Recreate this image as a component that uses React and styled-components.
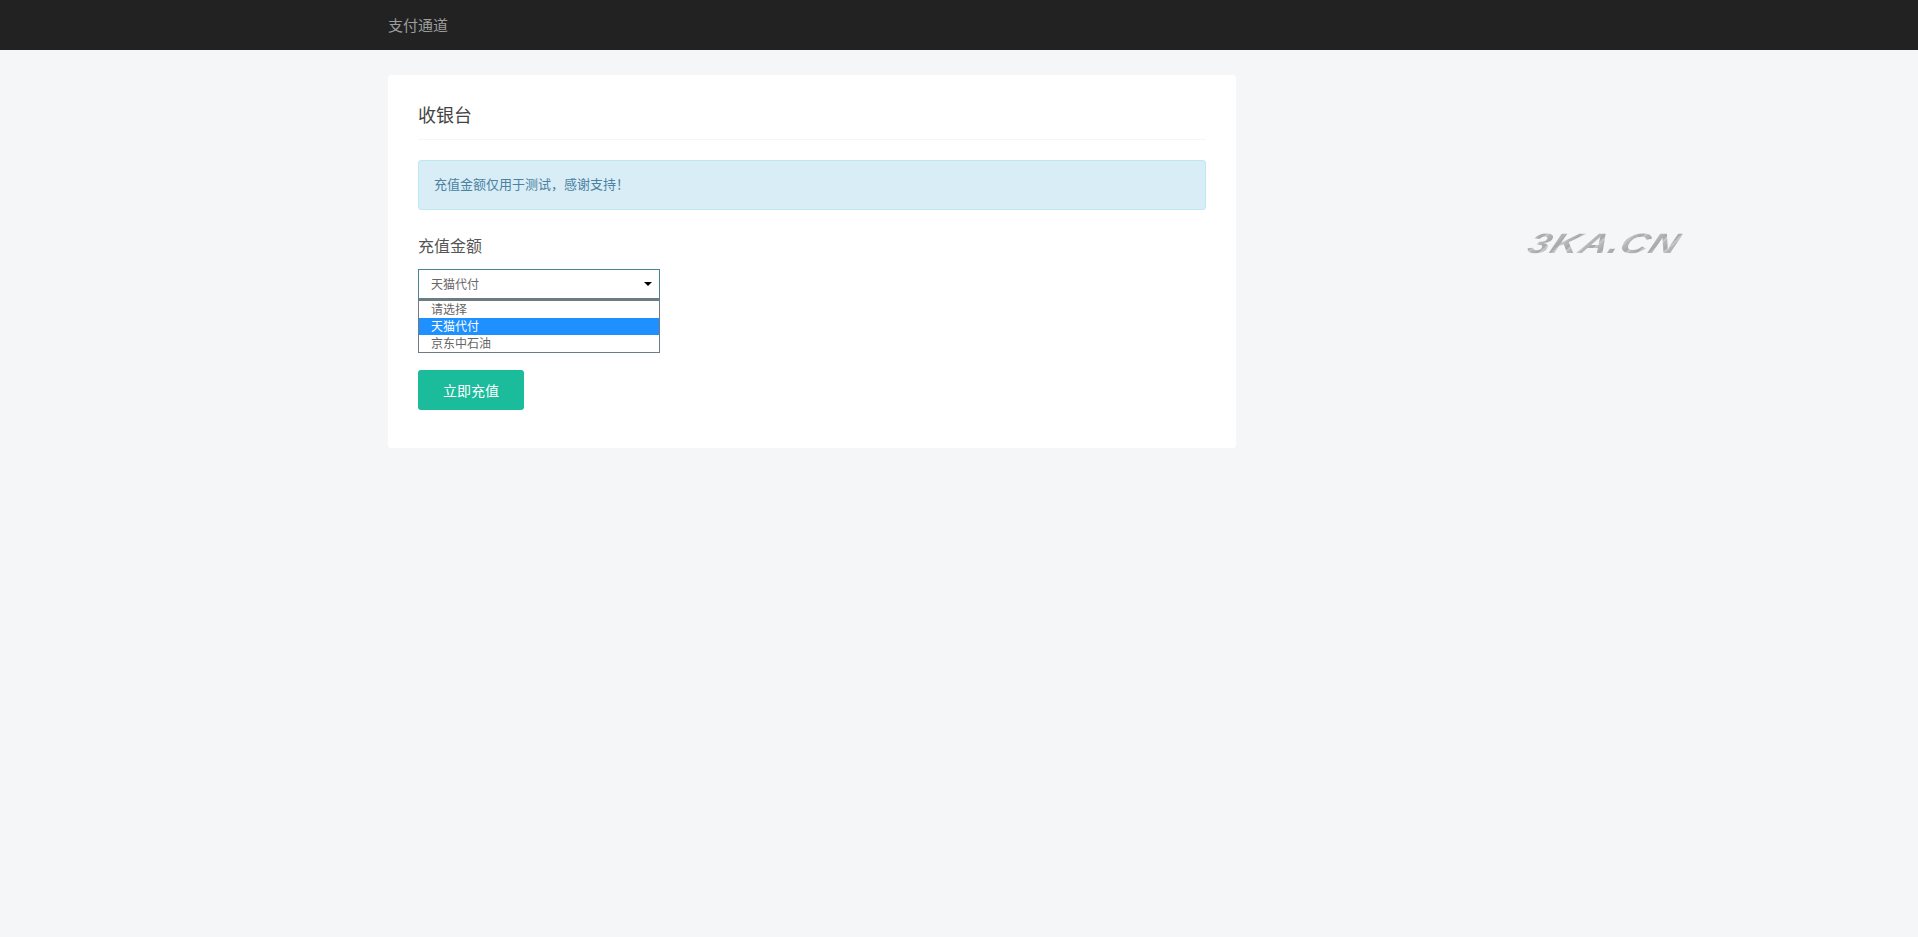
import React from "react"
import styled, { createGlobalStyle } from "styled-components"

const GlobalStyle = createGlobalStyle`
  html, body {
    margin: 0;
    padding: 0;
    background: #f4f6f8;
  }
  body {
    min-height: 937px;
    overflow: hidden;
    font-family: "Liberation Sans", "Noto Sans CJK SC", sans-serif;
    color: #555;
  }
`

const Navbar = styled.nav`
  height: 50px;
  background: #222;
  display: flex;
  align-items: center;
  padding: 0 0 2px 388px;
  box-sizing: border-box;
`

const Brand = styled.a`
  font-size: 15px;
  color: #9d9d9d;
  text-decoration: none;
`

const Page = styled.main`
  padding: 25px 0 0 388px;
`

const Panel = styled.section`
  width: 848px;
  box-sizing: border-box;
  background: #fff;
  border-radius: 3px;
  padding: 25px 30px 38px;
`

const Title = styled.h1`
  margin: 0;
  padding-bottom: 6px;
  font-size: 18px;
  line-height: 33px;
  font-weight: 400;
  color: #444;
  border-bottom: 1px solid #f5f5f5;
`

const Alert = styled.div`
  margin-top: 20px;
  height: 50px;
  box-sizing: border-box;
  display: flex;
  align-items: center;
  padding: 0 15px 4px;
  font-size: 13px;
  color: #4a82a0;
  background: #d9edf7;
  border: 1px solid #bce8f1;
  border-radius: 3px;
`

const Label = styled.label`
  display: block;
  margin-top: 26px;
  font-size: 16px;
  line-height: 22px;
  color: #555;
`

const SelectWrap = styled.div`
  position: relative;
  width: 242px;
  margin-top: 11px;
`

const SelectBox = styled.div`
  height: 31px;
  box-sizing: border-box;
  display: flex;
  align-items: center;
  justify-content: space-between;
  padding: 0 7px 2px 12px;
  font-size: 12px;
  color: #666;
  background: #fff;
  border: 1px solid #4b8299;
  border-bottom: 2px solid #6f7b82;
`

const Caret = styled.span`
  width: 0;
  height: 0;
  margin-top: 2px;
  border-left: 4px solid transparent;
  border-right: 4px solid transparent;
  border-top: 4px solid #000;
`

const OptionList = styled.ul`
  position: absolute;
  top: 31px;
  left: 0;
  right: 0;
  margin: 0;
  padding: 0;
  list-style: none;
  background: #fff;
  border: 1px solid #6f7b82;
  z-index: 10;
`

const Option = styled.li`
  height: 17px;
  line-height: 19px;
  padding-left: 12px;
  font-size: 12px;
  overflow: hidden;
  color: ${props => (props.$active ? "#fff" : "#666")};
  background: ${props => (props.$active ? "#1e90ff" : "#fff")};
`

const Submit = styled.button`
  display: block;
  width: 106px;
  height: 40px;
  margin-top: 70px;
  padding: 0;
  font-family: inherit;
  font-size: 14px;
  color: #fff;
  background: #1abc9c;
  border: none;
  border-radius: 3px;
`

// streaky grey wordmark, stretched wide like the original logo
const Watermark = styled.div`
  position: absolute;
  top: 228px;
  left: 1529px;
  transform-origin: left center;
  transform: scaleX(1.4) skewX(-16deg);
  font-family: "Liberation Sans", sans-serif;
  font-size: 28px;
  line-height: 32px;
  font-weight: 700;
  font-style: italic;
  letter-spacing: 0.5px;
  color: transparent;
  background: repeating-linear-gradient(115deg, #a9abad 0 3px, #c4c6c8 3px 5px, #b2b4b6 5px 8px);
  background-clip: text;
  -webkit-background-clip: text;
`

const options = [
  { label: "请选择" },
  { label: "天猫代付", active: true },
  { label: "京东中石油" },
]

const App = () => (
  <>
    <GlobalStyle />
    <Navbar>
      <Brand href="#">支付通道</Brand>
    </Navbar>
    <Page>
      <Panel>
        <Title>收银台</Title>
        <Alert>充值金额仅用于测试，感谢支持！</Alert>
        <Label>充值金额</Label>
        <SelectWrap>
          <SelectBox>
            天猫代付
            <Caret />
          </SelectBox>
          <OptionList>
            {options.map(o => (
              <Option key={o.label} $active={o.active}>{o.label}</Option>
            ))}
          </OptionList>
        </SelectWrap>
        <Submit type="button">立即充值</Submit>
      </Panel>
    </Page>
    <Watermark>3KA.CN</Watermark>
  </>
)

export default App
